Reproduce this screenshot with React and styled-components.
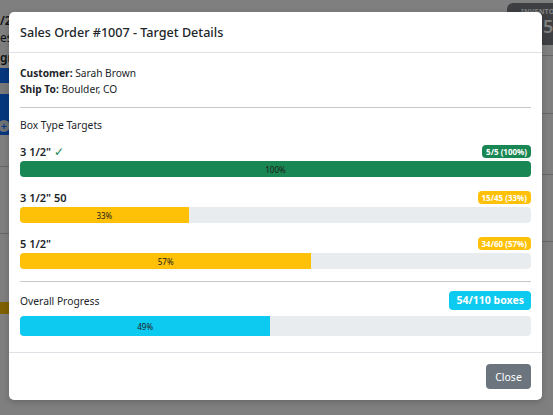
import React from "react";
import styled, { createGlobalStyle } from "styled-components";

const Global = createGlobalStyle`
  html, body { margin: 0; padding: 0; }
  body {
    width: 553px; height: 415px; overflow: hidden;
    font-family: "Noto Sans", "Open Sans", sans-serif;
    color: #212529; background: #fff;
  }
`;

/* ---------- page behind the dialog ---------- */
const Page = styled.div`
  position: relative;
  width: 553px; height: 415px;
  display: flex; justify-content: space-between;
  background: #fff;
  overflow: hidden;
`;
const LeftStrip = styled.div`
  width: 12px; display: flex; flex-direction: column;
  padding-top: 14px;
  font-size: 12px; font-weight: 600; color: #212529;
  overflow: hidden; white-space: nowrap;
`;
const Snip = styled.div`
  height: ${p => p.$h}px; line-height: ${p => p.$h}px;
  background: ${p => p.$bg || "transparent"};
  border-bottom: ${p => (p.$line ? "1px solid #ccc" : "none")};
  display: flex; align-items: center;
`;
const Plus = styled.span`
  width: 12px; height: 12px; border-radius: 50%;
  background: #dfe6ee; color: #0d6efd; font-size: 11px;
  display: flex; align-items: center; justify-content: center;
  margin-left: -2px;
`;
const RightStrip = styled.div`
  width: 46px; display: flex; flex-direction: column; padding-top: 3px;
`;
const StatBox = styled.div`
  height: 42px; background: #7a7f85; border-radius: 6px 0 0 6px;
  color: #fff; padding: 4px 0 0 14px; box-sizing: border-box;
  display: flex; flex-direction: column; overflow: hidden;
`;
const StatLabel = styled.span` font-size: 7px; font-weight: 700; letter-spacing: 0.2px; white-space: nowrap; `;
const StatNum = styled.span` font-size: 18px; font-weight: 600; line-height: 20px; margin-left: 22px; `;
const RLine = styled.div`
  height: ${p => p.$h}px; border-bottom: 1px solid #ccc;
`;

const Backdrop = styled.div`
  position: absolute; inset: 0;
  background: rgba(0, 0, 0, 0.5);
`;

/* ---------- dialog ---------- */
const Dialog = styled.div`
  position: absolute; left: 9px; top: 12px;
  width: 533px; height: 388px;
  background: #fff; border-radius: 5px;
  box-shadow: 0 2px 6px rgba(0,0,0,0.2);
  display: flex; flex-direction: column;
  font-size: 10.5px;
`;
const Header = styled.div`
  height: 41px; box-sizing: border-box;
  padding: 0 11px; display: flex; align-items: center;
  border-bottom: 1px solid #dee2e6;
`;
const Title = styled.h5`
  margin: 0; font-size: 12.6px; font-weight: 500; color: #212529;
`;
const Body = styled.div`
  padding: 12px 11px 16px;
  display: flex; flex-direction: column;
  border-bottom: 1px solid #dee2e6;
`;
const InfoLine = styled.div`
  line-height: 16px; font-size: 10.2px;
  b { font-weight: 700; }
`;
const Rule = styled.hr`
  border: 0; border-top: 1px solid #c8c8c8; height: 0;
  margin: ${p => p.$m};
`;
const SectionLabel = styled.div`
  font-size: 10.3px; line-height: 16px; margin-bottom: 10px;
`;
const Target = styled.div`
  display: flex; flex-direction: column; margin-bottom: ${p => p.$mb}px;
`;
const TargetHead = styled.div`
  display: flex; justify-content: space-between; align-items: center;
  height: 16px; margin-bottom: 2px;
`;
const TargetName = styled.span`
  font-size: 11px; font-weight: 600; color: #212529;
`;
const Check = styled.span` color: #198754; font-weight: 400; font-size: 12px; margin-left: 3px; `;
const Badge = styled.span`
  background: ${p => p.$bg}; color: #fff;
  font-size: ${p => p.$fs || 8}px; font-weight: 700;
  border-radius: 4px; padding: ${p => p.$pad || "1px 4px"};
  line-height: ${p => p.$lh || 11}px;
`;
const Track = styled.div`
  height: ${p => p.$h}px; background: #e9ecef; border-radius: 4px;
  overflow: hidden; display: flex;
`;
const Fill = styled.div`
  height: 100%; background: ${p => p.$bg};
  display: flex; align-items: center; justify-content: center;
  font-size: 8px; color: #1a1a1a;
`;
const OverallHead = styled.div`
  display: flex; justify-content: space-between; align-items: center;
  margin-bottom: 6px;
`;
const OverallLabel = styled.span` font-size: 10.3px; `;
const Footer = styled.div`
  flex: 1; display: flex; justify-content: flex-end; align-items: center;
  padding: 0 11px;
`;
const CloseBtn = styled.button`
  font-family: inherit; font-size: 10.5px; color: #fff;
  background: #6c757d; border: 0; border-radius: 4px;
  width: 45px; height: 25px; padding: 0; cursor: pointer;
`;

const targets = [
  { name: '3 1/2"', done: true, badge: "5/5 (100%)", pct: 100, color: "#198754" },
  { name: '3 1/2" 50', badge: "15/45 (33%)", pct: 33, color: "#ffc107" },
  { name: '5 1/2"', badge: "34/60 (57%)", pct: 57, color: "#ffc107" },
];

export default function App() {
  return (
    <>
      <Global />
      <Page>
        <LeftStrip>
          <Snip $h={14}>/2</Snip>
          <Snip $h={20} style={{ fontWeight: 400 }}>es</Snip>
          <Snip $h={20}>gr</Snip>
          <Snip $h={15} $bg="#0d6efd" />
          <Snip $h={11} $bg="#f1f1f1" />
          <Snip $h={38} $bg="#0d6efd" style={{ alignItems: "flex-end", paddingBottom: 3 }}><Plus>+</Plus></Snip>
          <Snip $h={31} $line />
          <Snip $h={66} $line />
          <Snip $h={68} />
          <Snip $h={12} $bg="#ffc107" />
        </LeftStrip>
        <RightStrip>
          <StatBox>
            <StatLabel>INVENTOR</StatLabel>
            <StatNum>5</StatNum>
          </StatBox>
          <RLine $h={10} />
          <RLine $h={57} />
          <RLine $h={60} />
          <RLine $h={66} />
        </RightStrip>
        <Backdrop />
        <Dialog>
          <Header>
            <Title>Sales Order #1007 - Target Details</Title>
          </Header>
          <Body>
            <InfoLine><b>Customer:</b> Sarah Brown</InfoLine>
            <InfoLine><b>Ship To:</b> Boulder, CO</InfoLine>
            <Rule $m="10px 0 9px" />
            <SectionLabel>Box Type Targets</SectionLabel>
            {targets.map((t, i) => (
              <Target key={t.name} $mb={i === targets.length - 1 ? 0 : 12}>
                <TargetHead>
                  <TargetName>
                    {t.name}
                    {t.done && <Check>✓</Check>}
                  </TargetName>
                  <Badge $bg={t.color}>{t.badge}</Badge>
                </TargetHead>
                <Track $h={16}>
                  <Fill $bg={t.color} style={{ width: `${t.pct}%` }}>{t.pct}%</Fill>
                </Track>
              </Target>
            ))}
            <Rule $m="12px 0 9px" />
            <OverallHead>
              <OverallLabel>Overall Progress</OverallLabel>
              <Badge $bg="#0dcaf0" $fs={10.5} $lh={15} $pad="2px 7px">54/110 boxes</Badge>
            </OverallHead>
            <Track $h={20}>
              <Fill $bg="#0dcaf0" style={{ width: "49%" }}>49%</Fill>
            </Track>
          </Body>
          <Footer>
            <CloseBtn>Close</CloseBtn>
          </Footer>
        </Dialog>
      </Page>
    </>
  );
}
